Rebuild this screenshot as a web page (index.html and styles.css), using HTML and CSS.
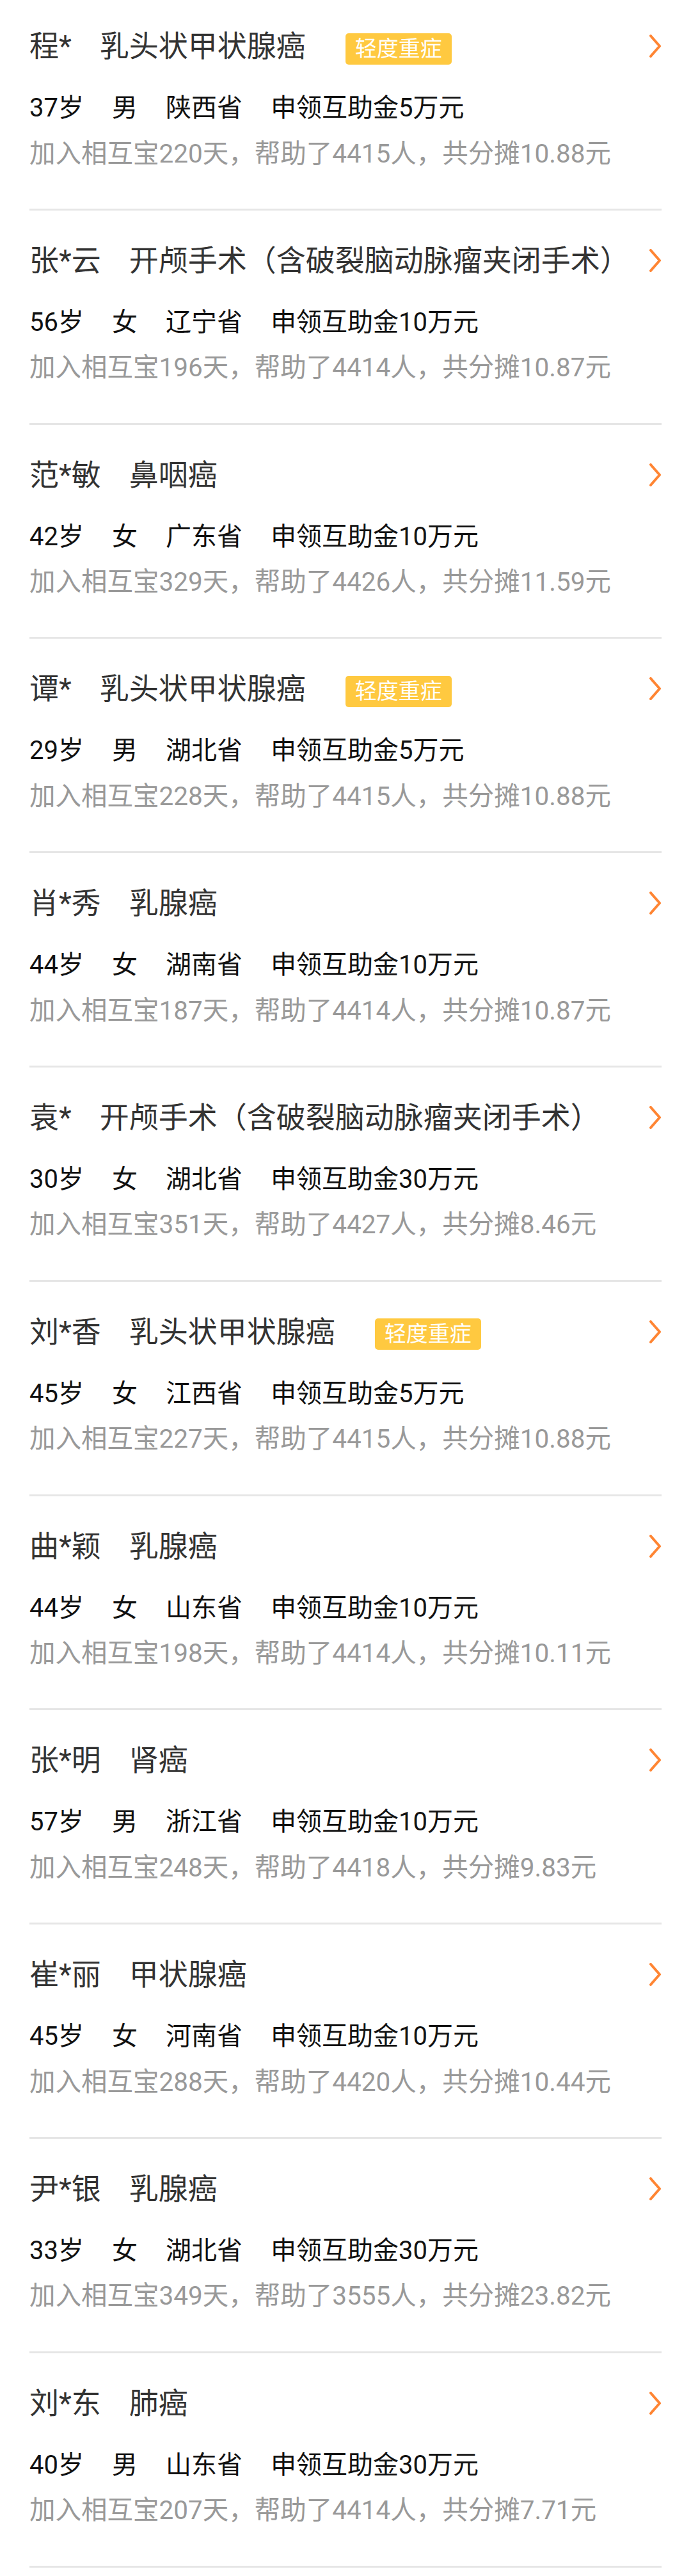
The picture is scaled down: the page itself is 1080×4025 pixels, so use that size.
FILE: index.html
```html
<!DOCTYPE html>
<html lang="zh-CN">
<head>
<meta charset="utf-8">
<title>互助案例</title>
<link rel="stylesheet" href="styles.css">
</head>
<body>
<svg width="0" height="0" class="defs">
  <defs>
    <symbol id="chev" viewBox="0 0 20 36">
      <polyline points="3,2 17,18 3,34" fill="none" stroke="currentColor" stroke-width="4" stroke-linecap="round" stroke-linejoin="round"/>
    </symbol>
  </defs>
</svg>
<main class="list">
  <div class="item">
    <div class="title"><span class="name">程*</span><span class="disease">乳头状甲状腺癌</span><span class="badge">轻度重症</span><svg class="chev"><use href="#chev"/></svg></div>
    <div class="info"><span>37岁</span><span>男</span><span>陕西省</span><span>申领互助金5万元</span></div>
    <div class="stat">加入相互宝220天，帮助了4415人，共分摊10.88元</div>
  </div>
  <div class="item">
    <div class="title"><span class="name">张*云</span><span class="disease">开颅手术（含破裂脑动脉瘤夹闭手术）</span><svg class="chev"><use href="#chev"/></svg></div>
    <div class="info"><span>56岁</span><span>女</span><span>辽宁省</span><span>申领互助金10万元</span></div>
    <div class="stat">加入相互宝196天，帮助了4414人，共分摊10.87元</div>
  </div>
  <div class="item">
    <div class="title"><span class="name">范*敏</span><span class="disease">鼻咽癌</span><svg class="chev"><use href="#chev"/></svg></div>
    <div class="info"><span>42岁</span><span>女</span><span>广东省</span><span>申领互助金10万元</span></div>
    <div class="stat">加入相互宝329天，帮助了4426人，共分摊11.59元</div>
  </div>
  <div class="item">
    <div class="title"><span class="name">谭*</span><span class="disease">乳头状甲状腺癌</span><span class="badge">轻度重症</span><svg class="chev"><use href="#chev"/></svg></div>
    <div class="info"><span>29岁</span><span>男</span><span>湖北省</span><span>申领互助金5万元</span></div>
    <div class="stat">加入相互宝228天，帮助了4415人，共分摊10.88元</div>
  </div>
  <div class="item">
    <div class="title"><span class="name">肖*秀</span><span class="disease">乳腺癌</span><svg class="chev"><use href="#chev"/></svg></div>
    <div class="info"><span>44岁</span><span>女</span><span>湖南省</span><span>申领互助金10万元</span></div>
    <div class="stat">加入相互宝187天，帮助了4414人，共分摊10.87元</div>
  </div>
  <div class="item">
    <div class="title"><span class="name">袁*</span><span class="disease">开颅手术（含破裂脑动脉瘤夹闭手术）</span><svg class="chev"><use href="#chev"/></svg></div>
    <div class="info"><span>30岁</span><span>女</span><span>湖北省</span><span>申领互助金30万元</span></div>
    <div class="stat">加入相互宝351天，帮助了4427人，共分摊8.46元</div>
  </div>
  <div class="item">
    <div class="title"><span class="name">刘*香</span><span class="disease">乳头状甲状腺癌</span><span class="badge">轻度重症</span><svg class="chev"><use href="#chev"/></svg></div>
    <div class="info"><span>45岁</span><span>女</span><span>江西省</span><span>申领互助金5万元</span></div>
    <div class="stat">加入相互宝227天，帮助了4415人，共分摊10.88元</div>
  </div>
  <div class="item">
    <div class="title"><span class="name">曲*颖</span><span class="disease">乳腺癌</span><svg class="chev"><use href="#chev"/></svg></div>
    <div class="info"><span>44岁</span><span>女</span><span>山东省</span><span>申领互助金10万元</span></div>
    <div class="stat">加入相互宝198天，帮助了4414人，共分摊10.11元</div>
  </div>
  <div class="item">
    <div class="title"><span class="name">张*明</span><span class="disease">肾癌</span><svg class="chev"><use href="#chev"/></svg></div>
    <div class="info"><span>57岁</span><span>男</span><span>浙江省</span><span>申领互助金10万元</span></div>
    <div class="stat">加入相互宝248天，帮助了4418人，共分摊9.83元</div>
  </div>
  <div class="item">
    <div class="title"><span class="name">崔*丽</span><span class="disease">甲状腺癌</span><svg class="chev"><use href="#chev"/></svg></div>
    <div class="info"><span>45岁</span><span>女</span><span>河南省</span><span>申领互助金10万元</span></div>
    <div class="stat">加入相互宝288天，帮助了4420人，共分摊10.44元</div>
  </div>
  <div class="item">
    <div class="title"><span class="name">尹*银</span><span class="disease">乳腺癌</span><svg class="chev"><use href="#chev"/></svg></div>
    <div class="info"><span>33岁</span><span>女</span><span>湖北省</span><span>申领互助金30万元</span></div>
    <div class="stat">加入相互宝349天，帮助了3555人，共分摊23.82元</div>
  </div>
  <div class="item">
    <div class="title"><span class="name">刘*东</span><span class="disease">肺癌</span><svg class="chev"><use href="#chev"/></svg></div>
    <div class="info"><span>40岁</span><span>男</span><span>山东省</span><span>申领互助金30万元</span></div>
    <div class="stat">加入相互宝207天，帮助了4414人，共分摊7.71元</div>
  </div>
</main>
</body>
</html>
```

FILE: styles.css
```css
html, body {
  margin: 0;
  padding: 0;
  background: #ffffff;
}

body {
  font-family: Roboto, "Noto Sans CJK SC", sans-serif;
  overflow: hidden;
}

.defs {
  position: absolute;
  width: 0;
  height: 0;
}

.list {
  margin-top: -6px;
}

.item {
  margin: 0 46px;
  padding: 48px 0 61.3px;
  border-bottom: 3px solid #e6e6e6;
}

.title {
  display: flex;
  align-items: center;
  height: 60px;
  font-size: 46px;
  line-height: 60px;
  color: #333333;
  white-space: nowrap;
}

.name {
  margin-right: 44px;
}

.badge {
  margin-left: 62px;
  margin-top: 8px;
  padding: 0 15px;
  height: 49px;
  line-height: 49px;
  font-size: 34px;
  color: #ffffff;
  background: #ffc940;
  border-radius: 5px;
}

.chev {
  width: 20px;
  height: 36px;
  margin-left: auto;
  color: #ff8533;
}

.info {
  display: flex;
  gap: 44px;
  margin-top: 42px;
  font-size: 40px;
  line-height: 50px;
  color: #111111;
}

.stat {
  margin-top: 20.5px;
  font-size: 40.5px;
  line-height: 50px;
  color: #999999;
  white-space: nowrap;
}
```
